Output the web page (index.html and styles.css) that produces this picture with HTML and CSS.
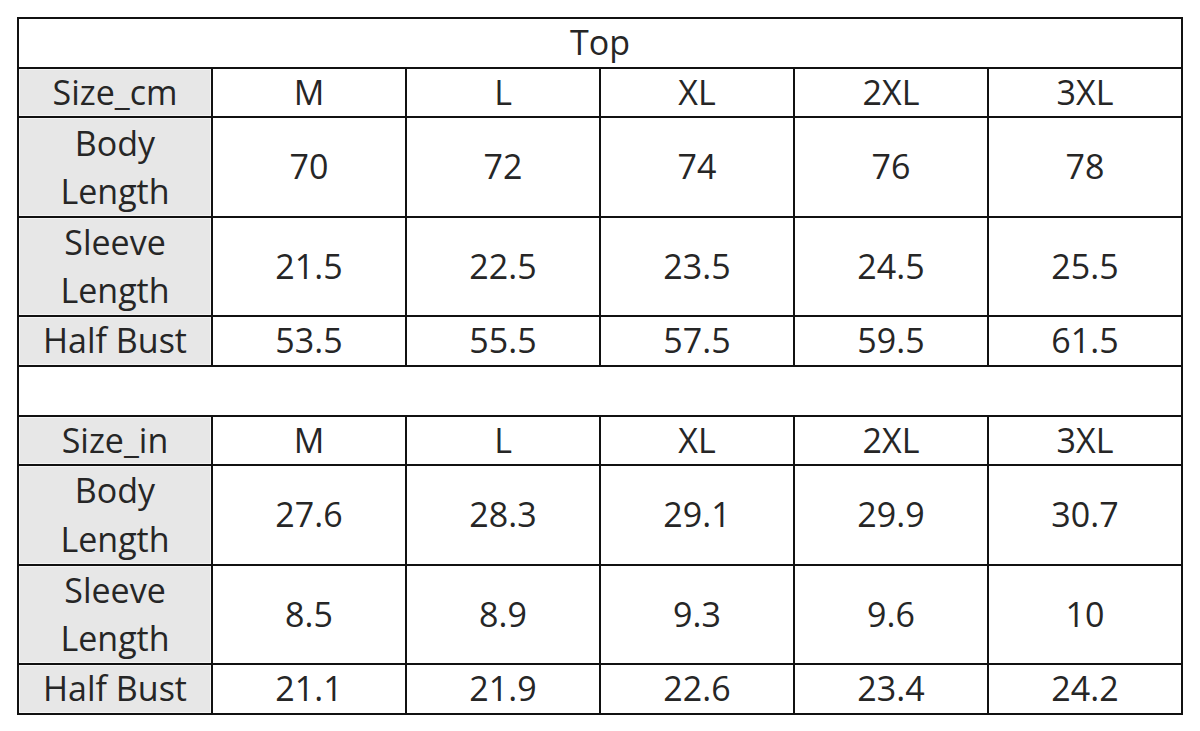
FILE: index.html
```html
<!DOCTYPE html>
<html>
<head>
<meta charset="utf-8">
<link rel="stylesheet" href="styles.css">
</head>
<body>
<table class="size-table">
  <colgroup>
    <col class="c"><col class="c"><col class="c"><col class="c"><col class="c"><col class="c">
  </colgroup>
  <tr class="r1"><td colspan="6" class="title">Top</td></tr>
  <tr class="r1"><th>Size_cm</th><td>M</td><td>L</td><td>XL</td><td>2XL</td><td>3XL</td></tr>
  <tr class="r2"><th>Body<br>Length</th><td>70</td><td>72</td><td>74</td><td>76</td><td>78</td></tr>
  <tr class="r2"><th>Sleeve<br>Length</th><td>21.5</td><td>22.5</td><td>23.5</td><td>24.5</td><td>25.5</td></tr>
  <tr class="r1"><th>Half Bust</th><td>53.5</td><td>55.5</td><td>57.5</td><td>59.5</td><td>61.5</td></tr>
  <tr class="r1"><td colspan="6"></td></tr>
  <tr class="r1"><th>Size_in</th><td>M</td><td>L</td><td>XL</td><td>2XL</td><td>3XL</td></tr>
  <tr class="r2"><th>Body<br>Length</th><td>27.6</td><td>28.3</td><td>29.1</td><td>29.9</td><td>30.7</td></tr>
  <tr class="r2"><th>Sleeve<br>Length</th><td>8.5</td><td>8.9</td><td>9.3</td><td>9.6</td><td>10</td></tr>
  <tr class="r1"><th>Half Bust</th><td>21.1</td><td>21.9</td><td>22.6</td><td>23.4</td><td>24.2</td></tr>
</table>
</body>
</html>
```
FILE: styles.css
```css
html, body {
  margin: 0;
  padding: 0;
  background: #ffffff;
}
body {
  padding: 17px 0 0 17px;
}
.size-table {
  border-collapse: collapse;
  table-layout: fixed;
  width: 1166px;
  font-family: "Open Sans", "Noto Sans", sans-serif;
  font-size: 34px;
  color: #262626;
}
.size-table td,
.size-table th {
  border: 2px solid #111;
  text-align: center;
  vertical-align: middle;
  padding: 0;
  font-weight: normal;
  line-height: 47.5px;
}
.size-table th {
  background: #e7e7e7;
  box-shadow: inset 0 0 0 1px #f4f4f4;
}
.r2 th {
  line-height: 48.5px;
}
.r1 { height: 49.7px; }
.r2 { height: 99.4px; }
```
